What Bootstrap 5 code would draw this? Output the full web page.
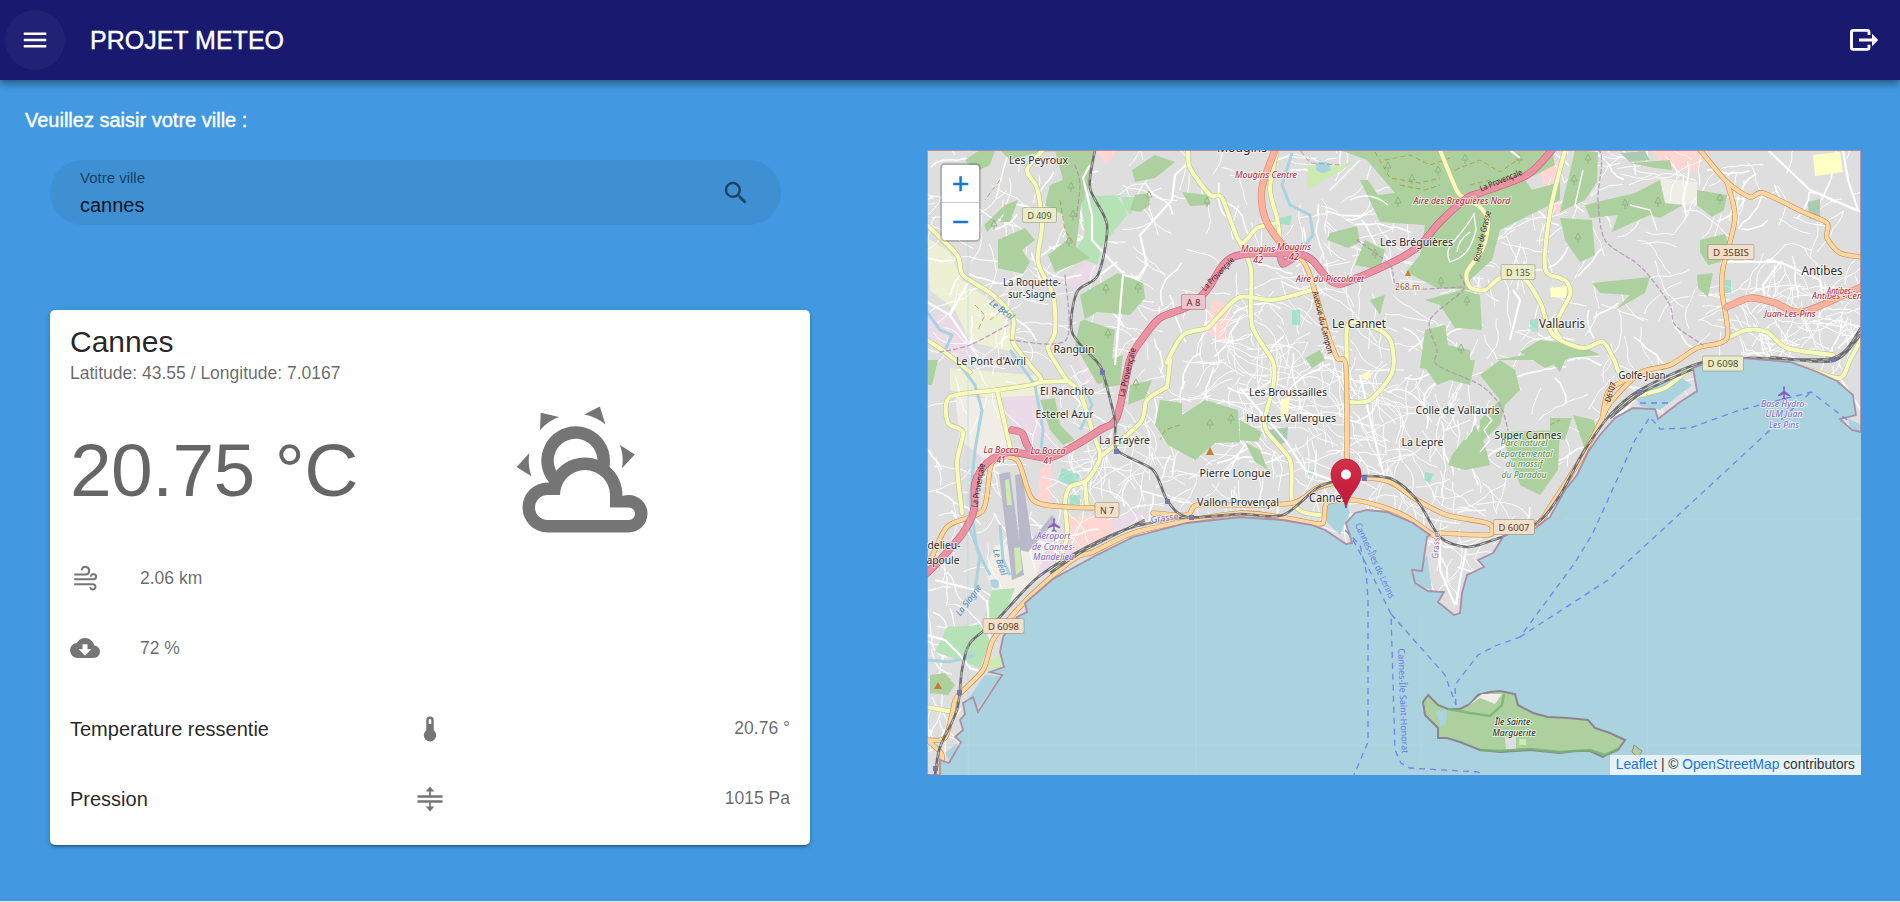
<!DOCTYPE html>
<html lang="fr">
<head>
<meta charset="utf-8">
<meta name="viewport" content="width=device-width, initial-scale=1">
<title>PROJET METEO</title>
<link href="https://cdn.jsdelivr.net/npm/bootstrap@5.3.0/dist/css/bootstrap.min.css" rel="stylesheet">
<style>
  body{font-family:"Liberation Sans",Arial,sans-serif;background:#4299e1;color:#fff;font-size:20px;line-height:1.5;height:902px;overflow:hidden}
  .topbar{height:80px;background:#191970;padding:0 19px 0 5px;box-shadow:0 3px 5px -1px rgba(0,0,0,.2),0 5px 8px rgba(0,0,0,.18),0 1px 12px rgba(0,0,0,.15);z-index:2}
  .menu-btn{width:60px;height:60px;background:rgba(255,255,255,.035);border:0}
  .brand-title{font-size:25px;line-height:1;margin-left:25px;-webkit-text-stroke:.4px #fff}
  .intro{padding:25px 25px 0;height:70px;-webkit-text-stroke:.4px #fff}
  .left-pane{width:760px;margin-left:50px;padding-top:10px}
  .right-pane{width:934px;margin-right:39px}
  .city-field{width:731px;height:65px;background:rgba(0,0,0,.06);padding:0 30px;color:rgba(0,0,0,.87)}
  .city-field label{font-size:15px;line-height:20px;margin-top:-4px;color:rgba(0,0,0,.6)}
  .city-field input{font-size:20px;line-height:26px;height:26px;outline:0;color:rgba(0,0,0,.87)}
  .weather{margin-top:85px;height:535px;border:0;border-radius:5px;padding:0 20px;color:rgba(0,0,0,.87);box-shadow:0 3px 2px -2px rgba(0,0,0,.25),0 2px 3px rgba(0,0,0,.18),0 1px 6px rgba(0,0,0,.14)}
  .weather h1{font-size:30px;line-height:40px;margin:12px 0 0;font-weight:400}
  .soft{font-size:17.5px;color:rgba(0,0,0,.6)}
  .coords{line-height:22px}
  .now-row{height:147px;margin-top:12px}
  .temp{font-size:75px;line-height:1;letter-spacing:-.625px;padding-top:2px;color:rgba(0,0,0,.6)}
  .big-ico{margin-left:152px}
  .fact{height:70px}
  .fact .soft{margin-left:40px}
  .measures{margin-top:11px}
  .measure{height:70px}
  .measure>*{flex:1 1 0}
  .measure .soft{padding-bottom:1px}
  svg.ico{fill:rgba(0,0,0,.54);display:block}
  .map{height:625px;background:#aad3df}
  .map>svg{display:block}
  .zoom-box{left:13px;top:13px;width:41px;border:2px solid rgba(0,0,0,.2);border-radius:5px;background-clip:padding-box;background-color:#fff;padding:0}
  .zoom-box button{border:0;background:none;color:#1976d2;height:37px;width:37px;font:30px/36px "Liberation Sans",sans-serif;padding:0;-webkit-text-stroke:.4px #1976d2}
  .zoom-box button+button{border-top:1px solid #ccc;height:38px}
  .credit{right:0;bottom:0;height:20px;padding:0 6px;font-size:13.75px;line-height:19px;background:rgba(255,255,255,.7);color:#333;white-space:nowrap}
  .credit a{color:#1976d2;text-decoration:none}
  .page-foot{height:1px;background:#d3e7f8}
  .map text{font-family:"Noto Sans","Open Sans",sans-serif;text-anchor:middle;paint-order:stroke;stroke:rgba(255,255,255,.65);stroke-width:2px;stroke-linejoin:round;fill:#2c2c2c}
  .map text.exit{font-style:italic;fill:#b5202e}
  .map text.air{font-style:italic;fill:#8461c4}
  .map text.park{font-style:italic;fill:#5c8a58}
  .map text.isle{font-style:italic;fill:#222}
  .map text.sea{fill:#6a7be8;stroke:none}
  .map text.river{fill:#4b8ac0;font-style:italic;stroke:none}
  .map text.road{stroke:none;fill:#40202a}
  .map text.sign{stroke:none}
  .map text.peak{fill:#9c5f30}
  .map text.rail{fill:#8d6a99}
</style>
</head>
<body class="d-flex flex-column">
<nav class="topbar navbar flex-nowrap justify-content-between position-relative">
  <div class="d-flex align-items-center">
    <button class="menu-btn rounded-circle d-flex align-items-center justify-content-center p-0" aria-label="Menu">
      <svg width="30" height="30" viewBox="0 0 24 24" fill="#fff"><path d="M3,6H21V8H3V6M3,11H21V13H3V11M3,16H21V18H3V16Z"/></svg>
    </button>
    <span class="brand-title">PROJET METEO</span>
  </div>
  <svg width="36" height="30" viewBox="0 0 36 30" fill="none" stroke="#fff" stroke-width="2.9"><path d="M24 10V7Q24 5.400 22.200 5.400H8.300Q6.500 5.400 6.500 7V22.600Q6.500 24.400 8.300 24.400H22.200Q24 24.400 24 22.600V19.800M14 15H28"/><path d="M27 8.800L33.200 15L27 21.200Z" fill="#fff" stroke="none"/></svg>
</nav>
<p class="intro mb-0">Veuillez saisir votre ville :</p>
<main class="d-flex justify-content-between align-items-start flex-grow-1">
  <section class="left-pane">
    <div class="city-field rounded-pill d-flex align-items-center">
      <div class="flex-grow-1 d-flex flex-column pt-1">
        <label for="city">Votre ville</label>
        <input id="city" class="border-0 bg-transparent p-0 mt-1 w-100" value="cannes">
      </div>
      <svg class="ico" width="30" height="30" viewBox="0 0 24 24"><path d="M9.5,3A6.5,6.5 0 0,1 16,9.5C16,11.11 15.41,12.59 14.44,13.73L14.71,14H15.5L20.5,19L19,20.5L14,15.5V14.71L13.73,14.44C12.59,15.41 11.11,16 9.5,16A6.5,6.5 0 0,1 3,9.5A6.5,6.5 0 0,1 9.5,3M9.5,5C7,5 5,7 5,9.5C5,12 7,14 9.5,14C12,14 14,12 14,9.5C14,7 12,5 9.5,5Z"/></svg>
    </div>
    <article class="weather card">
      <h1>Cannes</h1>
      <div class="soft coords">Latitude: 43.55 / Longitude: 7.0167</div>
      <div class="now-row d-flex align-items-center">
        <span class="temp text-nowrap">20.75 °C</span>
        <svg class="ico big-ico flex-shrink-0" width="150" height="150" viewBox="0 0 24 24"><path d="M12.74,5.47C15.1,6.5 16.35,9.03 15.92,11.46C17.19,12.56 18,14.19 18,16V16.17C18.31,16.06 18.65,16 19,16A3,3 0 0,1 22,19A3,3 0 0,1 19,22H6A4,4 0 0,1 2,18A4,4 0 0,1 6,14H6.27C5,12.45 4.6,10.24 5.5,8.26C6.72,5.5 9.97,4.24 12.74,5.47M11.93,7.3C10.16,6.5 8.09,7.31 7.31,9.07C6.85,10.09 6.93,11.22 7.41,12.13C8.5,10.83 10.16,10 12,10C12.7,10 13.38,10.12 14,10.34C13.94,9.06 13.18,7.86 11.93,7.3M13.55,3.64C13,3.4 12.45,3.23 11.88,3.12L14.37,1.82L15.27,4.71C14.76,4.29 14.19,3.93 13.55,3.64M6.09,4.44C5.6,4.79 5.17,5.19 4.8,5.63L4.91,2.82L7.87,3.5C7.25,3.71 6.65,4.03 6.09,4.44M18,9.71C17.91,9.12 17.78,8.55 17.59,8L19.97,9.5L17.92,11.73C18.03,11.08 18.05,10.4 18,9.71M3.04,11.3C3.11,11.9 3.24,12.47 3.43,13L1.06,11.5L3.1,9.28C3,9.93 2.97,10.61 3.04,11.3M19,18H16V16A4,4 0 0,0 12,12A4,4 0 0,0 8,16H6A2,2 0 0,0 4,18A2,2 0 0,0 6,20H19A1,1 0 0,0 20,19A1,1 0 0,0 19,18Z"/></svg>
      </div>
      <div class="fact d-flex align-items-center">
        <svg width="30" height="30" viewBox="0 0 30 30" fill="none" stroke="#757575" stroke-width="2" stroke-linecap="round"><path d="M5 11.5H15.5A3.8 3.8 0 1 0 11.8 6.5M5 16.3H23.5A2.6 2.6 0 1 0 21 13M5 21.3H23A2.6 2.6 0 1 1 20.5 25"/></svg>
        <span class="soft">2.06 km</span>
      </div>
      <div class="fact d-flex align-items-center">
        <svg class="ico" width="30" height="30" viewBox="0 0 24 24"><path d="M17,13L12,18L7,13H10V9H14V13M19.35,10.03C18.67,6.59 15.64,4 12,4C9.11,4 6.6,5.64 5.35,8.03C2.34,8.36 0,10.9 0,14A6,6 0 0,0 6,20H19A5,5 0 0,0 24,15C24,12.36 21.95,10.22 19.35,10.03Z"/></svg>
        <span class="soft">72 %</span>
      </div>
      <div class="measures">
        <div class="measure d-flex align-items-center">
          <span>Temperature ressentie</span>
          <svg class="ico" height="30" viewBox="0 0 24 24"><path d="M15,13V5A3,3 0 0,0 9,5V13A5,5 0 1,0 15,13M12,4A1,1 0 0,1 13,5V8H11V5A1,1 0 0,1 12,4Z"/></svg>
          <span class="soft text-end">20.76 °</span>
        </div>
        <div class="measure d-flex align-items-center">
          <span>Pression</span>
          <svg class="ico" height="30" viewBox="0 0 24 24"><path d="M8.5,18H11.3V15H2V13H22V15H12.7V18H15.5L12,22L8.5,18M12,2L8.5,6H11.3V9H2V11H22V9H12.7V6H15.5L12,2Z"/></svg>
          <span class="soft text-end">1015 Pa</span>
        </div>
      </div>
    </article>
  </section>
  <section class="right-pane">
    <div class="map position-relative overflow-hidden">
      <svg width="934" height="625" viewBox="927 150 934 625">
        <defs>
          <path id="coast" d="M927 150H1861V432L1852 430 1840 419 1856 415 1853 395 1837 381 1815 371 1790 362 1743 358 1715 360 1693 368 1697 391 1680 402 1658 419 1655 409 1633 408 1615 418 1600 435 1588 452 1577 475 1565 490 1550 517 1530 532 1512 532 1503 537 1493 553 1478 560 1484 567 1467 575 1462 593 1460 613 1454 615 1438 602 1444 592 1428 591 1415 583 1412 570 1422 571 1427 537 1430 535 1413 523 1387 512 1367 510 1355 513 1346 523 1352 543 1346 544 1325 530 1312 525 1283 520 1240 517 1187 523 1133 537 1093 557 1053 579 1025 603 1027 612 1017 617 1003 637 1000 652 1004 667 990 672 1002 675 978 712 973 697 963 703 965 714 960 720 963 730 955 737 961 742 949 763 940 760 940 775H927Z"/>
          <clipPath id="land"><use href="#coast"/></clipPath>
          <linearGradient id="pin" x1="0" y1="0" x2="0" y2="1"><stop offset="0" stop-color="#d3304a"/><stop offset="1" stop-color="#c01636"/></linearGradient>
        </defs>
        <use href="#coast" fill="#dedede"/>
        <g clip-path="url(#land)">
          <!-- fields, industry and shops -->
          <path fill="#eef0d5" d="M927 238L950 252 962 280 990 300 1010 325 1014 352 970 342 955 310 930 290ZM950 368L1040 376 1045 395 990 398 950 390Z"/>
          <path fill="#ebdbe8" d="M927 318L950 312 980 355 965 365 940 350 927 345ZM1078 268L1098 256 1097 272 1078 288 1064 285ZM1003 398L1045 395 1050 440 1018 440ZM1060 545L1120 515 1150 512 1040 580 1010 590 1040 560ZM1438 215L1462 205 1460 228 1440 240ZM1075 350L1100 362 1105 385 1088 385Z"/>
          <path fill="#f0ece6" d="M955 395L1002 400 1012 452 985 460 960 440ZM1122 277L1140 275 1138 287 1126 290ZM1010 265L1025 263 1024 275 1012 272ZM1660 178L1697 182 1697 205 1665 204ZM1473 175L1500 172 1502 185 1473 186ZM995 545L1050 540 1035 580 1000 610 985 570Z"/>
          <path fill="#ffd6d1" d="M1651 150H1707L1697 172 1665 166ZM1040 470L1052 460 1050 510 1038 500ZM1067 517L1113 515 1110 535 1075 550ZM1540 165L1560 160 1560 218 1545 200ZM1212 300L1232 305 1224 345 1206 330ZM1095 150H1117L1106 165Z"/>
          <g id="streets" fill="none" stroke="#fff" stroke-linejoin="round" stroke-linecap="round"></g>
          <path fill="#ffffc6" d="M1813 155L1840 152 1843 172 1815 176ZM1281 400L1290 397 1287 418 1280 422ZM1453 230L1465 226 1462 237 1454 238ZM1362 375L1370 370 1371 378 1363 379ZM1550 288L1567 286 1566 298 1551 297Z"/>
          <path fill="#b5e3b5" d="M1081 197L1120 195 1127 215 1103 245 1097 265 1073 255 1085 235ZM947 627L980 625 990 640 980 668 960 660 935 652ZM985 615L992 590 1015 588 1008 606 993 624ZM1140 197H1117L1130 215Z"/>
          <path fill="#cdebb0" d="M1308 165L1337 167 1355 160 1342 170 1307 190ZM990 660L1002 655 1002 668 985 670Z"/>
          <!-- woods -->
          <g fill="#add19e">
            <path d="M1055 150H1094L1088 190 1081 205 1076 247 1090 258 1055 272 1048 255 1067 240 1063 215 1045 205 1050 185 1063 180ZM1080 295L1118 273 1143 283 1145 298 1130 315 1097 312 1080 322 1075 345 1098 385 1110 378 1115 330 1085 320ZM1340 150H1552L1555 165 1525 180 1532 190 1560 182 1560 200 1500 230 1492 260 1470 280 1470 290 1437 288 1406 272 1420 255 1425 225 1380 222 1360 180 1368 180 1378 195 1395 193 1367 160ZM980 150H995L990 165 975 172 965 160ZM984 225L1005 205 1018 200 1010 222 1000 222 1005 212 987 232ZM998 240L1025 228 1035 240 1022 250 1030 262 1023 274 998 268ZM1135 195L1148 193 1150 205 1140 212 1130 210ZM1175 162L1155 155 1132 170 1135 182 1155 178ZM1182 192L1208 195 1210 205 1190 206ZM1330 233L1357 226 1360 242 1348 248 1327 240ZM1365 240L1385 250 1380 270 1355 265ZM1425 300L1462 290 1480 295 1482 330 1455 328 1440 305ZM1425 330L1445 325 1448 345 1470 350 1470 375 1420 368ZM1560 218L1592 220 1595 255 1580 262 1565 240ZM1575 150L1598 152 1597 182 1585 200 1560 212 1568 180ZM1585 205L1635 193 1660 180 1665 203 1683 205 1660 218 1650 215 1612 232 1618 215 1590 218ZM1697 190L1727 195 1724 210 1712 217 1697 205ZM1700 240L1725 234 1730 250 1720 262 1708 265 1700 252ZM1697 275L1713 273 1708 297 1698 288ZM1592 283L1650 277 1645 293 1615 310 1630 295 1600 293ZM1630 163L1670 160 1672 170 1655 168ZM1540 340L1580 345 1600 355 1570 358 1545 368 1520 352Z"/>
            <path d="M1420 360H1475L1470 385 1450 380 1437 385ZM1480 375L1500 360 1515 370 1520 390 1505 405 1500 425 1478 445 1480 420 1500 400ZM1452 455L1475 425 1485 445 1490 465 1465 470 1448 465ZM1500 432L1560 430 1558 470 1540 495 1520 485 1510 458ZM1573 415L1594 420 1596 430 1585 450ZM1550 418L1572 418 1565 440 1550 438ZM1495 360H1560L1525 355ZM1160 400L1182 403 1182 415 1205 400 1238 410 1240 442 1215 443 1195 460 1168 445 1155 425ZM1240 420L1262 432 1258 442 1240 440ZM1130 385L1152 380 1145 398 1128 405ZM1102 362L1123 355 1120 385 1103 388ZM1245 442L1260 450 1268 470 1255 462ZM930 675L945 673 955 685 948 695 930 693ZM927 360H938L932 385H927ZM1040 400L1055 398 1060 425 1075 440 1063 445 1050 430ZM1370 300L1385 295 1380 315ZM1305 358L1320 350 1325 360 1312 368ZM1550 360H1565L1560 372ZM1090 150 H1000 L1010 160 1040 152Z"/>
          </g>
          <g fill="#aacbaf"><path d="M1808 202L1820 199 1820 217 1809 219ZM1268 430L1288 427 1287 440 1278 447ZM1620 153L1645 151 1650 160 1630 162Z"/></g>
          <path fill="#8fe0c0" opacity=".7" d="M1292 310H1300V325H1292ZM1725 280H1731V293H1725ZM1530 320L1538 318 1538 333 1530 330ZM1425 472L1433 474 1430 483 1424 480ZM1062 468L1080 475 1075 487 1058 480ZM1280 218L1292 215 1290 225 1280 224ZM1070 495H1080V510H1070ZM1308 470H1314V475H1308Z"/>
          <path fill="#aad3df" d="M1316 163Q1330 158 1331 170 1322 176 1316 170ZM1327 503L1345 498 1350 512 1340 535 1327 522ZM990 580Q1002 577 998 588 990 590 990 580ZM1633 393L1680 377 1692 385 1660 410 1640 406ZM1750 360Q1770 354 1800 362L1790 364ZM1413 575L1427 555 1432 590 1416 584ZM965 703L985 675 1000 676 978 708ZM1848 418L1861 425V432L1850 428ZM945 753L958 743 950 762Z"/>
          <g id="trees" fill="none" stroke="#8fb583" stroke-width="1"></g>
          <g fill="none" stroke="#b08b3c" stroke-width=".9" stroke-dasharray="5 3" opacity=".8"><path d="M1375 152L1390 178 1420 183 1440 178M1385 160L1410 155 1430 165 1450 158M1340 165L1310 163 1300 150M1400 185L1425 190 1440 185M1455 170L1480 160 1500 172 1520 158M1470 185L1490 180M1060 200L1065 230 1075 245M975 305L985 315 978 330M990 320L1000 312M1000 180L985 200M1180 425L1165 430 1160 440M1550 425L1560 420"/></g>
          <path fill="none" stroke="#aad3df" stroke-width="3" d="M1292 153L1282 185 1290 205 1310 215 1313 235 1305 245M927 312L940 330 952 335 945 350 960 365 975 385 982 410 975 450 970 500 977 550 990 575M1010 350L1035 385 1043 430 1040 460M968 525L980 555 975 590M1083 385L1092 405 1080 430M1000 525L1003 560 1010 575M927 660L950 662 975 655"/>
          <g fill="none" stroke="#fff" stroke-width="2.2"><path d="M1188 163L1175 175 1172 200 1140 235 1147 265 1138 278 1123 275 1115 365M1090 165L1083 178 1092 215 1092 240 1112 262 1123 273M1100 275L1117 262M927 302L950 315 980 360M950 315L968 283M1768 150L1810 190 1861 212M1843 150L1848 180 1858 210M1510 150L1520 158M1780 262L1763 285 1765 300M1727 262L1780 262 1820 280 1825 310M1240 388L1285 440 1305 470 1345 485M1360 375L1375 440 1385 480M1440 540L1440 570 1455 605M1467 545L1460 580 1456 605M927 635L945 640 960 655 970 668 982 672M935 580L975 590 985 600M987 600L990 640M1840 378L1861 410M1513 290L1520 300 1510 340"/></g>
          <path fill="none" stroke="#fff" stroke-width="1.3" d="M1450 262Q1444 250 1455 240 1468 225 1474 214L1476 230Q1470 255 1455 260ZM1457 252Q1458 240 1470 232M1330 190L1350 170 1360 160M1350 200Q1370 190 1388 205M1440 218L1430 240M1490 400L1484 412 1492 420 1484 430 1490 440 1480 452M1478 405L1472 430 1465 440M1455 415L1446 430 1470 420M1583 170L1575 205 1584 212M1630 205L1650 210 1657 230"/>
          <!-- airport -->
          <path fill="#b9b9cb" d="M999 474L1010 472 1024 575 1012 580ZM1015 475L1022 474 1032 540 1052 515 1056 520 1028 552 1020 550Z"/>
          <path fill="#cdebb0" d="M1005 480L1009 479 1012 505 1007 505ZM1014 548L1020 547 1022 570 1016 575Z"/>
          <g id="roads" fill="none" stroke-linejoin="round" stroke-linecap="round"></g>
        </g>
        <use href="#coast" fill="none" stroke="#a7819f" stroke-width="1.8" opacity=".85"/>
        <!-- islands -->
        <path d="M1428 695L1438 705 1448 709 1460 709 1470 704 1478 695 1490 692 1500 691 1515 694 1518 705 1533 713 1548 717 1568 718 1588 720 1595 728 1610 733 1625 740 1618 750 1606 755 1603 757 1590 751 1575 751 1560 753 1530 750 1500 752 1480 750 1460 742 1447 738 1438 738 1438 728 1425 715 1423 702Z" fill="#add19e" stroke="#8f8392" stroke-width="2"/>
        <path d="M1436 711L1447 710 1446 725 1440 726Z" fill="#aad3df"/><path d="M1468 706L1482 694 1502 694 1495 704 1480 698Z" fill="#f0ece6"/><path d="M1505 737H1516V749H1506Z" fill="#dedede"/><path d="M1519 739H1526V745H1519Z" fill="#cdebb0"/>
        <path d="M1448 709L1470 713 1490 716 1502 705 1504 694M1480 750L1500 751 1530 749 1560 752 1590 750 1605 755 1618 749" fill="none" stroke="#74b374" stroke-width="2.5" opacity=".8"/>
        <path d="M1634 745L1642 751 1638 758 1632 752Z" fill="#add19e" stroke="#a7819f"/>
        <path d="M968 150V775M1196 530V775M1421 615V775M1647 425V775M927 745H1425M1645 745H1861M1565 519H1861" stroke="#b7dbe4" stroke-width="1" opacity=".6"/>
        <g fill="none" stroke="#7183f0" stroke-width="1.3" stroke-dasharray="6 5">
          <path d="M1345 530L1360 545 1366 570 1368 600V742L1354 775M1353 540L1372 575 1391 614 1395 750 1401 763 1410 768 1478 772 1483 775M1391 614L1445 675 1456 705M1456 705L1455 685 1478 655 1495 646 1520 637 1574 564 1592 535 1635 440 1650 417 1660 429 1690 428 1740 410 1811 392 1850 422M1520 637L1608 580 1700 495 1770 430 1811 392M1640 403H1668"/>
        </g>
        <g id="signs"></g>
        <g id="labels"></g>
        <path d="M1405 276L1408 270 1411 276ZM1206 455L1210 447 1214 455ZM934 689L938 682 942 689Z" fill="#c77b35"/>
        <path fill="#8461c4" d="M1053.200 519Q1054 517 1054.800 519V523L1060 527V528.500L1054.800 526.500V529.500L1056.500 531V532L1054 531.200 1051.500 532V531L1053.200 529.500V526.500L1048 528.500V527L1053.200 523ZM1783.200 387Q1784 385 1784.800 387V391L1790 395V396.500L1784.800 394.500V397.500L1786.500 399V400L1784 399.200 1781.500 400V399L1783.200 397.500V394.500L1778 396.500V395L1783.200 391Z"/>
        <path fill="#7378b8" d="M1100 370h5v5h-5zM1114 449h5v5h-5zM1165 499h5v5h-5zM1189 515h5v5h-5zM1362 476h5v5h-5zM1637 390h5v5h-5zM1831 357h5v5h-5zM957 690h5v5h-5zM933 766h5v5h-5z"/>
        <path d="M1346 508C1343 492 1331 488 1331 474A15 15 0 0 1 1361 474C1361 488 1349 492 1346 508Z" fill="url(#pin)" stroke="#b3203b" stroke-width=".8"/><circle cx="1346" cy="474.500" r="5" fill="#fff"/>
      </svg>
      <div class="zoom-box btn-group-vertical position-absolute"><button aria-label="Zoom avant">+</button><button aria-label="Zoom arrière">−</button></div>
      <div class="credit position-absolute"><a href="#">Leaflet</a> | © <a href="#">OpenStreetMap</a> contributors</div>
    </div>
  </section>
</main>
<footer class="page-foot"></footer>
<script>
const NS = 'http://www.w3.org/2000/svg';
function add(parent, tag, attrs, text) {
  const el = document.createElementNS(NS, tag);
  for (const k in attrs) el.setAttribute(k, attrs[k]);
  if (text) el.textContent = text;
  document.getElementById(parent).appendChild(el);
  return el;
}
// smooth a polyline given as a flat list of coordinates
function curve(s) {
  const n = s.trim().split(/[ ,]+/).map(Number), p = [];
  for (let i = 0; i < n.length; i += 2) p.push([n[i], n[i + 1]]);
  let d = `M${p[0]}`;
  for (let i = 0; i < p.length - 1; i++) {
    const a = p[i - 1] || p[i], b = p[i], c = p[i + 1], e = p[i + 2] || c;
    d += `C${b[0] + (c[0] - a[0]) / 7},${b[1] + (c[1] - a[1]) / 7} ${c[0] - (e[0] - b[0]) / 7},${c[1] - (e[1] - b[1]) / 7} ${c}`;
  }
  return d;
}
// minor streets: short wandering lines, repeatable from a fixed seed
let seed = 41;
const rnd = () => (seed = (seed * 16807) % 2147483647) / 2147483647;
const dense = [[1340, 450, 110, 60, 90], [1290, 340, 90, 60, 50], [1140, 480, 60, 30, 35], [1800, 320, 60, 35, 60], [1440, 560, 25, 45, 14]];
function street(x, y, w) {
  let a = Math.floor(rnd() * 4) * 1.57 + (rnd() - .5), d = `M${x.toFixed(1)} ${y.toFixed(1)}`;
  for (let i = 0, n = 3 + rnd() * 5; i < n; i++) {
    a += (rnd() - .5) * .9;
    x += Math.cos(a) * 7; y += Math.sin(a) * 7;
    d += `L${x.toFixed(1)} ${y.toFixed(1)}`;
  }
  add('streets', 'path', {d, 'stroke-width': w});
}
for (let i = 0; i < 760; i++) street(927 + rnd() * 934, 150 + rnd() * 420, rnd() < .2 ? 1.6 : 1);
for (const [cx, cy, rx, ry, n] of dense)
  for (let i = 0; i < n; i++) street(cx + (rnd() - .5) * 2 * rx, cy + (rnd() - .5) * 2 * ry, 1);
for (let i = 0; i < 25; i++) street(930 + rnd() * 40, 580 + rnd() * 190, 1.2);
for (const [x, y] of [[1071, 188], [1073, 216], [1069, 243], [994, 226], [1106, 290], [1138, 289], [1108, 335], [1388, 168], [1438, 172], [1398, 203], [1465, 160], [1412, 180], [1375, 255], [1441, 283], [1467, 302], [1519, 160], [1578, 239], [1574, 181], [1588, 160], [1625, 205], [1658, 203], [1720, 200], [1149, 197], [1207, 203], [1231, 420], [1136, 385], [1210, 425], [1461, 350], [1422, 719], [1463, 718], [1495, 737], [1560, 742], [1591, 741]])
  add('trees', 'path', {d: `M${x} ${y + 4}v-4l-3 0 3-6 3 6h-3`});
const roads = [
  ['#bfc58a', '#f7fabf', 4, ['1043 150 1027 170 1037 188 1042 225 1038 262 1053 295 1055 332 1048 348 1057 365 1067 380 1080 393 1093 433 1100 457 1087 480 1070 487 1065 503 1067 537 1055 570', '927 225 957 255 963 275 993 295 1013 318 1013 342 1030 365 1040 382 997 390 950 397 948 423 963 432 957 463 962 513', '927 340 945 352 970 372', '997 390 1010 447', '1085 483 1087 507', '1040 382 1067 381', '1188 150 1190 168 1210 195 1222 198 1240 242 1257 228 1277 223', '1277 150 1270 188 1277 218 1280 240', '1240 242 1251 270 1252 325 1273 362 1273 387 1265 427 1290 460 1292 500 1303 512 1320 515', '1167 387 1170 360 1167 362 1183 335 1207 328 1217 318 1240 297 1273 300 1312 290', '1167 387 1147 400 1140 423 1100 457', '1440 150 1453 182 1460 195 1480 207 1488 222 1483 248 1467 272 1470 287 1485 290 1500 278 1523 278 1540 302 1553 335 1583 348 1603 342 1615 362 1620 373 1640 377', '1565 150 1550 212 1545 268 1560 278 1567 282 1570 295 1555 325 1560 338', '1347 365 1347 328 1357 322 1383 332 1392 345 1392 373 1370 400 1350 402', '1730 337 1747 330 1767 332 1787 348 1833 355', '1610 416 1633 398 1665 388 1695 368 1760 359 1810 370 1840 378 1850 360 1861 340', '927 707 953 712']],
  ['#c98f3d', '#fcd6a4', 4, ['1295 250 1307 268 1315 292 1327 332 1337 358 1346 367 1347 460 1347 480', '1700 150 1727 182 1750 197 1763 193 1803 212 1827 223 1827 238 1840 253 1861 257', '1727 182 1735 218 1723 268 1722 292 1727 338 1697 348 1670 365 1640 373 1610 403 1600 423 1580 460 1550 507 1537 523 1500 530', '927 740 945 738 953 710 957 697 983 670 993 640 1017 610 1040 587 1075 558 1093 552 1133 533 1187 521 1240 513 1280 517 1307 522 1323 523 1327 503 1353 500 1383 507 1407 517 1433 535', '927 570 947 527 983 510 992 463 1017 460 1033 500 1067 507 1100 508 1108 509', '1153 513 1187 515 1197 505 1240 505 1293 503 1317 488 1340 482 1363 478 1390 482 1417 500 1447 515 1487 523 1492 530 1487 535 1440 533', '927 740 942 755 938 775', '1640 373 1625 380 1608 392 1602 420']],
  ['#e0846b', '#f9b29c', 6, ['1275 150 1262 188 1265 218 1280 242 1293 253', '1727 307 1750 298 1775 303 1803 312 1861 287']],
  ['#d0577f', '#e892a2', 6.3, ['1552 150 1527 175 1480 193 1467 198 1440 222 1420 245 1397 260 1357 278 1340 284 1327 278 1312 260 1293 253 1240 255 1223 265 1207 290 1187 307 1160 318 1143 338 1130 360 1117 417 1100 430 1067 450 1047 458 1010 452 987 463 975 483 974 510 963 533 940 560 927 573', '1012 430 1022 433 1027 445 1035 456', '1280 255 1283 264 1293 258']]
];
const rails = ['1095 150 1090 188 1107 225 1098 275 1077 292 1072 332 1097 362 1103 373 1115 420 1117 450 1153 470 1167 500 1187 517 1240 514 1283 515 1317 488 1340 480 1363 476 1392 479 1417 500 1440 537 1467 547 1493 540 1537 523 1560 495 1583 453 1610 415 1640 390 1700 363 1750 358 1833 358 1861 328', '1187 517 1133 527 1087 547 1037 578 997 620 970 643 962 670 957 710 940 747 935 775', '1610 418 1643 392 1700 366', '1145 520 1085 550 1050 573', '1770 357 1833 361 1861 334'];
for (const [edge, fill, w, list] of roads) {
  list.forEach(s => add('roads', 'path', {d: curve(s), stroke: edge, 'stroke-width': w + 1.2}));
  list.forEach(s => add('roads', 'path', {d: curve(s), stroke: fill, 'stroke-width': w}));
}
rails.forEach(s => {
  add('roads', 'path', {d: curve(s), stroke: '#6e6e6e', 'stroke-width': 2.6, 'stroke-linecap': 'butt'});
  add('roads', 'path', {d: curve(s), stroke: '#c4c4c4', 'stroke-width': 1, 'stroke-dasharray': '6 6', 'stroke-linecap': 'butt'});
});
['1550 150 1599 150 1598 200 1605 240 1635 262 1650 277 1670 305 1675 325 1703 345', '1460 275 1463 290 1430 320 1437 350 1437 365 1480 385 1500 405 1508 430', '1357 240 1390 265 1400 288 1462 287', '1008 325 970 345 940 352', '1065 275 1066 340 1010 340', '1075 165 1080 185 1076 220']
  .forEach(s => add('roads', 'path', {d: curve(s), stroke: '#b08cb4', 'stroke-width': 1.3, 'stroke-dasharray': '4 3', opacity: .8}));
// road number plates: text, centre x, centre y, width, fill, ink
for (const [t, x, y, w, bg, ink] of [['D 409', 1039.5, 215, 34, '#e9ebcb', '#4d5424'], ['A 8', 1193.5, 302, 24, '#ecc5cd', '#6b2435'], ['D 135', 1518, 272, 34, '#e9ebcb', '#4d5424'], ['D 35BIS', 1731, 252, 46, '#f1dfcb', '#5c4020'], ['D 6098', 1723, 363.5, 41, '#e9ebcb', '#4d5424'], ['N 7', 1107, 510, 24, '#f1dfcb', '#5c4020'], ['D 6007', 1514, 527, 41, '#f1dfcb', '#5c4020'], ['D 6098', 1003.5, 626, 41, '#f1dfcb', '#5c4020']]) {
  add('signs', 'rect', {x: x - w / 2, y: y - 7.5, width: w, height: 15, rx: 1.5, fill: bg, stroke: ink, 'stroke-opacity': .3});
  add('signs', 'text', {x, y: y + 3.5, class: 'sign', 'font-size': 9.8, style: `fill:${ink}`, textLength: w - 10, lengthAdjust: 'spacingAndGlyphs'}, t);
}
// place names: text, centre x, baseline, drawn width, size, class, rotation
for (const [t, x, y, w, fs, c, r] of [
  ['Les Peyroux', 1038.5, 164, 59, 10.8], ['La Roquette-', 1032, 286, 58, 10.8], ['sur-Siagne', 1032, 298, 48, 10.8], ['Ranguin', 1074, 353, 41, 10.8],
  ["Le Pont d'Avril", 991, 365, 70, 10.8], ['El Ranchito', 1067, 395, 54, 10.8], ['Esterel Azur', 1064.5, 417.5, 58, 10.8], ['La Frayère', 1124.5, 444, 51, 10.8],
  ['Pierre Longue', 1235, 477, 71, 10.8], ['Vallon Provençal', 1238, 505.5, 82, 10.8], ['delieu-', 944, 549, 33, 11], ['apoule', 943, 564, 33, 11],
  ['Mougins', 1242, 152, 50, 12], ['Les Bréguières', 1416.5, 246, 73, 11], ['Le Cannet', 1359, 327.5, 54, 11.8], ['Vallauris', 1562, 328, 46, 11.8], ['Antibes', 1822, 275, 41, 11.8],
  ['Les Broussailles', 1288, 396, 78, 10.8], ['Hautes Vallergues', 1291, 421.5, 90, 10.8], ['Colle de Vallauris', 1457.5, 413.5, 84, 10.8], ['La Lepre', 1422.5, 445.5, 42, 10.8], ['Super Cannes', 1528, 439, 67, 10.8],
  ['Cannes', 1328, 502, 38, 11.8], ['Golfe-Juan', 1642, 379, 47, 10.8],
  ['Mougins Centre', 1266, 178, 62, 9.5, 'exit'], ['Mougins', 1258, 252, 34, 9.5, 'exit'], ['42', 1258, 263, 10, 9.5, 'exit'], ['Mougins', 1294, 250, 34, 9.5, 'exit'], ['42', 1294, 260, 10, 9.5, 'exit'],
  ['Aire des Breguières Nord', 1462, 203.5, 97, 9.5, 'exit'], ['Aire du Piccolaret', 1330, 282, 68, 9.5, 'exit'], ['La Bocca', 1001, 452.5, 35, 9.5, 'exit'], ['41', 1001, 462.5, 9, 9.5, 'exit'], ['La Bocca', 1048, 453.5, 35, 9.5, 'exit'], ['41', 1048, 463.5, 9, 9.5, 'exit'],
  ['Antibes - Cen', 1837, 299, 50, 9, 'exit'], ['Antibes -', 1841, 294, 28, 9, 'exit'], ['Juan-Les-Pins', 1790, 317, 51, 9.2, 'exit'],
  ['Aéroport', 1053.5, 539, 34, 9.5, 'air'], ['de Cannes-', 1053.5, 549.5, 43, 9.5, 'air'], ['Mandelieu', 1053.5, 560, 41, 9.5, 'air'],
  ['Base Hydro-', 1784, 406.5, 46, 9.3, 'air'], ['ULM Juan', 1784, 417, 37, 9.3, 'air'], ['Les Pins', 1784, 427.5, 30, 9.3, 'air'],
  ['Parc naturel', 1524, 446, 47, 9, 'park'], ['departemental', 1524, 456.5, 57, 9, 'park'], ['du massif', 1524, 467, 37, 9, 'park'], ['du Paradou', 1524, 478, 45, 9, 'park'],
  ['Île Sainte-', 1514, 725, 38, 9.5, 'isle'], ['Marguerite', 1514, 735.5, 43, 9.5, 'isle'],
  ['268 m', 1407.5, 290, 25, 8.8, 'peak'], ['Grasse', 1165, 521, 28, 9, 'rail', -8], ['Grasse', 1439, 546, 26, 9, 'rail', -86],
  ['La Provençale', 1502, 183, 45, 8.5, 'road', -22], ['La Provençale', 1220, 276, 43, 8.5, 'road', -46], ['La Provençale', 1130, 373, 50, 8.5, 'road', -76], ['La Provençale', 981, 486, 44, 8.5, 'road', -80],
  ['Avenue du Campon', 1320, 323, 64, 8.5, 'road', 76], ['Route de Grasse', 1485, 237, 52, 8.5, 'road', -77], ['D6107', 1613, 393, 20, 8, 'road', -72],
  ['Le Béal', 1000, 312, 28, 9, 'river', 36], ['Le Béal', 997, 563, 27, 9, 'river', 72], ['La Siagne', 971, 602, 36, 9, 'river', -53],
  ['Cannes-Îles de Lerins', 1372, 562, 82, 9.2, 'sea', 65], ['Cannes-Île Saint-Honorat', 1400, 701, 105, 9.2, 'sea', 88]
]) {
  const a = {x, y, 'font-size': fs, textLength: w, lengthAdjust: 'spacingAndGlyphs'};
  if (c) a.class = c;
  if (r) a.transform = `rotate(${r} ${x} ${y})`;
  add('labels', 'text', a, t);
}
</script>
<script src="https://cdn.jsdelivr.net/npm/bootstrap@5.3.0/dist/js/bootstrap.bundle.min.js"></script>
</body>
</html>
